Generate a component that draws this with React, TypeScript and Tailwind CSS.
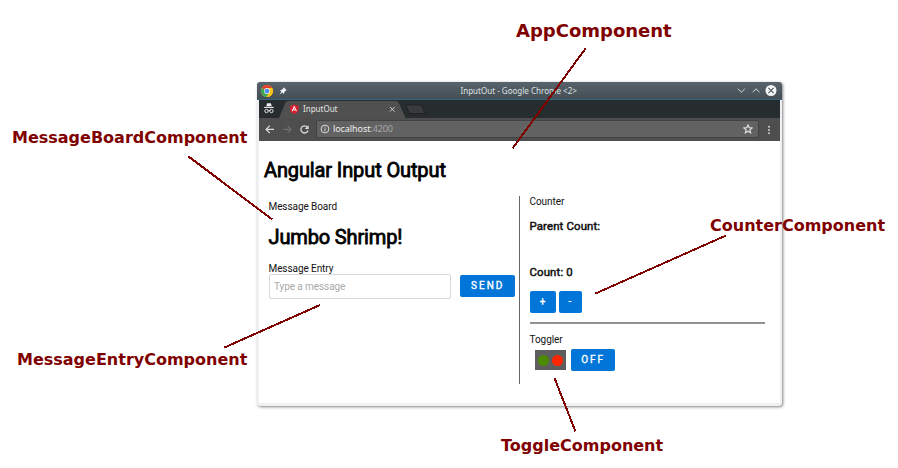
import type { ReactNode } from "react";

function ChromeLogo() {
  return (
    <svg className="block h-3 w-3" viewBox="0 0 24 24">
      <circle cx="12" cy="12" r="12" fill="#fbc516" />
      <path d="M12 12 L1.6 6 A12 12 0 0 1 22.4 6 Z" fill="#e2412f" />
      <path d="M1.6 6 A12 12 0 0 0 11 24 L17 15 L12 12 Z" fill="#3ba757" />
      <path d="M12 6 H22.4 A12 12 0 0 1 11 24 L17 15 Z" fill="#fbc516" />
      <circle cx="12" cy="12" r="5.8" fill="#f3f5f6" />
      <circle cx="12" cy="12" r="4.7" fill="#4a8af4" />
    </svg>
  );
}

function TitleBar() {
  return (
    <div className="relative flex h-[18px] items-center rounded-t-[3px] border-b border-[#366483] bg-linear-to-b from-[#58636b] to-[#434e55] pl-[4.5px]">
      <ChromeLogo />
      <svg className="ml-[5.5px] block h-2 w-2" viewBox="0 0 8 8">
        <path d="M4.6 0.2 L7.8 3.2 L6.8 3.6 L5.2 5.4 L5 7 L3.2 5.4 L0.4 7.7 L2.4 4.6 L0.8 3.2 L2.6 2.9 L4.3 1.3 Z" fill="#f2f4f5" />
      </svg>
      <span className="absolute left-[204px] top-[3px] whitespace-pre text-[8px] leading-[12px] tracking-[0.01px] text-[#dfe2e4]">
        InputOut - Google Chrome &lt;2&gt;
      </span>
      <svg className="absolute left-[480px] top-[2px] block h-3 w-[42px]" viewBox="0 0 42 12" fill="none">
        <path d="M1 4.8 L4.4 8.2 L7.8 4.8 M15.7 8.2 L19.1 4.8 L22.5 8.2" stroke="#dcdfe1" strokeWidth="1" />
        <circle cx="34" cy="6.5" r="5.5" fill="#f4f5f5" />
        <path d="M31.4 3.9 L36.6 9.1 M36.6 3.9 L31.4 9.1" stroke="#4b555b" strokeWidth="1.1" />
      </svg>
    </div>
  );
}

function TabStrip() {
  return (
    <div className="relative h-[18px] bg-[#272c2f]">
      <svg className="block h-[18px] w-[521px]" viewBox="0 0 521 18" fill="none">
        <path d="M20 18 L26.5 2.6 Q27.1 1 29 1 H137 Q139 1 139.7 2.6 L146.5 18 Z" fill="#505050" />
        <path d="M146.8 5 H162.5 L166.2 13.6 H150.5 Z" fill="#383b3c" stroke="#1c2022" strokeWidth="0.8" />
        <path d="M7.3 6.2 L8.1 3.2 H11.9 L12.7 6.2 Z" fill="#eceeee" />
        <path d="M5.2 7.4 H14.8" stroke="#eceeee" strokeWidth="1.1" />
        <circle cx="7.5" cy="11" r="1.7" stroke="#eceeee" strokeWidth="0.9" />
        <circle cx="12.4" cy="11" r="1.7" stroke="#eceeee" strokeWidth="0.9" />
        <path d="M9.2 10.5 H10.8" stroke="#eceeee" strokeWidth="0.9" />
        <path d="M35.3 4.4 L39.7 6 L39 11.9 L35.3 14 L31.6 11.9 L30.9 6 Z" fill="#d5202f" />
        <path d="M33.2 11.2 L35.3 6.4 L37.4 11.2 M34 9.8 H36.6" stroke="#fff" strokeWidth="1" />
        <path d="M131 7 L135.6 11.6 M135.6 7 L131 11.6" stroke="#c9c9c9" strokeWidth="1" />
      </svg>
      <span className="absolute left-[44px] top-[3px] text-[8px] leading-[12px] text-[#e4e4e4]">InputOut</span>
    </div>
  );
}

function Toolbar() {
  return (
    <div className="flex h-[23px] items-center bg-[#4e4e4e]">
      <svg className="block h-[23px] w-[57px] shrink-0" viewBox="0 0 57 23" fill="none">
        <path d="M15 11.4 H7.3 M10.8 7.7 L7.1 11.4 L10.8 15.1" stroke="#dedede" strokeWidth="1.2" />
        <path d="M24.5 11.4 H32 M28.6 7.9 L32.1 11.4 L28.6 14.9" stroke="#707070" strokeWidth="1.1" />
        <path d="M48.3 9.1 A3.6 3.6 0 1 0 49 12.4" stroke="#dedede" strokeWidth="1.3" />
        <path d="M49.6 7.2 V11 H45.8 Z" fill="#dedede" />
      </svg>
      <div className="relative -mt-px flex h-[18px] w-[443px] items-center rounded-[2px] border border-[#434343] bg-[#626262]">
        <svg className="ml-[3px] block h-[10px] w-[10px]" viewBox="0 0 10 10" fill="none">
          <circle cx="5" cy="5" r="3.9" stroke="#d8d8d8" strokeWidth="1" />
          <path d="M5 4.4 V7.3 M5 2.6 V3.6" stroke="#d8d8d8" strokeWidth="1" />
        </svg>
        <span className="ml-[3px] text-[9px] leading-[12px] tracking-[-0.08px] text-[#eeeeee]">
          localhost<span className="text-[#a8a8a8]">:4200</span>
        </span>
        <svg className="absolute right-[5px] top-[3px] block h-[10px] w-[10px]" viewBox="0 0 10 10" fill="none">
          <path d="M5 1 L6.2 3.7 L9.1 4 L6.9 5.9 L7.6 8.8 L5 7.3 L2.4 8.8 L3.1 5.9 L0.9 4 L3.8 3.7 Z" stroke="#dcdcdc" strokeWidth="1.2" />
        </svg>
      </div>
      <svg className="ml-[7.5px] block h-[10px] w-1" viewBox="0 0 4 10" fill="#d0d0d0">
        <circle cx="2" cy="1.7" r="1" />
        <circle cx="2" cy="5" r="1" />
        <circle cx="2" cy="8.3" r="1" />
      </svg>
    </div>
  );
}

function Button({ size, children }: { size: string; children: ReactNode }) {
  return (
    <button className={`flex h-[22px] shrink-0 items-center justify-center rounded-[2px] bg-[#0275d8] text-[10px] leading-none text-white [-webkit-text-stroke:0.35px] ${size}`}>
      {children}
    </button>
  );
}

function MessageBoard() {
  return (
    <section className="w-[250.5px] shrink-0 pt-1">
      <p className="text-[10px] leading-[14px] tracking-[-0.08px]">Message Board</p>
      <h2 className="mt-[11px] text-[20px] leading-6 tracking-[-0.14px] text-black [-webkit-text-stroke:0.8px]">Jumbo Shrimp!</h2>
      <p className="mt-[13px] text-[10px] leading-[14px] tracking-[-0.08px]">Message Entry</p>
      <div className="-mt-[2px] flex items-center">
        <input
          className="h-[25px] w-[182px] rounded-[2px] border border-[#d9d9d9] px-[4.5px] text-[10px] tracking-[-0.08px] placeholder:text-[#a9a9a9]"
          placeholder="Type a message"
        />
        <div className="-mt-px ml-[9.5px]">
          <Button size="w-[54.5px] tracking-[2px] pl-px">SEND</Button>
        </div>
      </div>
    </section>
  );
}

function Counter() {
  return (
    <section className="w-[235px]">
      <p className="text-[10px] leading-3 tracking-[-0.05px]">Counter</p>
      <p className="mt-[11.5px] text-[11.4px] leading-3 tracking-[0.14px] [-webkit-text-stroke:0.5px]">Parent Count:</p>
      <p className="mt-[34px] text-[11.4px] leading-3 tracking-[0.14px] [-webkit-text-stroke:0.5px]">Count: 0</p>
      <div className="mt-[13.5px] flex gap-[3px]">
        <Button size="w-[26px]">+</Button>
        <Button size="w-[23px]">-</Button>
      </div>
      <div className="mt-[9px] h-[1.5px] bg-[#929292]" />
      <p className="mt-[10.5px] text-[10px] leading-3 tracking-[-0.05px]">Toggler</p>
      <div className="mt-[3px] flex items-center pl-[5px]">
        <div className="flex h-5 w-[31px] items-center justify-center gap-[2.6px] bg-[#5e5e5e] pl-px">
          <span className="h-[11px] w-[11px] rounded-full bg-[#4b8b00]" />
          <span className="h-[11px] w-[11px] rounded-full bg-[#ff2600]" />
        </div>
        <div className="ml-[5px]">
          <Button size="w-[44px] tracking-[1.9px] pl-px">OFF</Button>
        </div>
      </div>
    </section>
  );
}

function BrowserWindow() {
  return (
    <div className="ml-[256.5px] mt-[82px] h-[323.5px] w-[525.5px] rounded-[3px] bg-[#eff0f1] font-['Noto_Sans','Liberation_Sans',sans-serif] shadow-[1px_1px_3px_rgba(0,0,0,0.5)]">
      <TitleBar />
      <div className="ml-[2.5px] mr-[2px] h-[303px] bg-white">
        <TabStrip />
        <Toolbar />
        <main className="pl-[5px] pt-[17px] font-['Roboto','Liberation_Sans',sans-serif] text-[#111]">
          <h1 className="text-[20px] leading-6 tracking-[-0.12px] text-black [-webkit-text-stroke:0.8px]">Angular Input Output</h1>
          <div className="mt-[14px] flex pl-[4.5px]">
            <MessageBoard />
            <div className="h-[188px] border-l border-[#666] pl-[9.5px]">
              <Counter />
            </div>
          </div>
        </main>
      </div>
    </div>
  );
}

const labels = [
  { text: "AppComponent", place: "left-[516px] top-[21px] text-[18px]" },
  { text: "MessageBoardComponent", place: "left-[12px] top-[128px] text-[16px]" },
  { text: "CounterComponent", place: "left-[710px] top-[216px] text-[16px]" },
  { text: "MessageEntryComponent", place: "left-[17px] top-[350px] text-[16px]" },
  { text: "ToggleComponent", place: "left-[501px] top-[436px] text-[16px]" },
];

export default function App() {
  return (
    <div className="relative flex h-[468px] w-[898px] items-start overflow-hidden bg-white">
      <BrowserWindow />
      <svg className="absolute inset-0 h-[468px] w-[898px]" viewBox="0 0 898 468" shapeRendering="crispEdges">
        <path
          d="M585.5 48.5 L512.5 148.5 M188.5 156.5 L272.5 219.5 M726 235.5 L595.5 293.5 M224.5 347.5 L320 305 M554.5 378 L575.5 431.5"
          stroke="#800000"
          strokeWidth="2"
          fill="none"
        />
      </svg>
      {labels.map((label) => (
        <span
          key={label.text}
          className={`absolute whitespace-nowrap font-['DejaVu_Sans',sans-serif] font-bold leading-5 text-[#800000] ${label.place}`}
        >
          {label.text}
        </span>
      ))}
    </div>
  );
}
